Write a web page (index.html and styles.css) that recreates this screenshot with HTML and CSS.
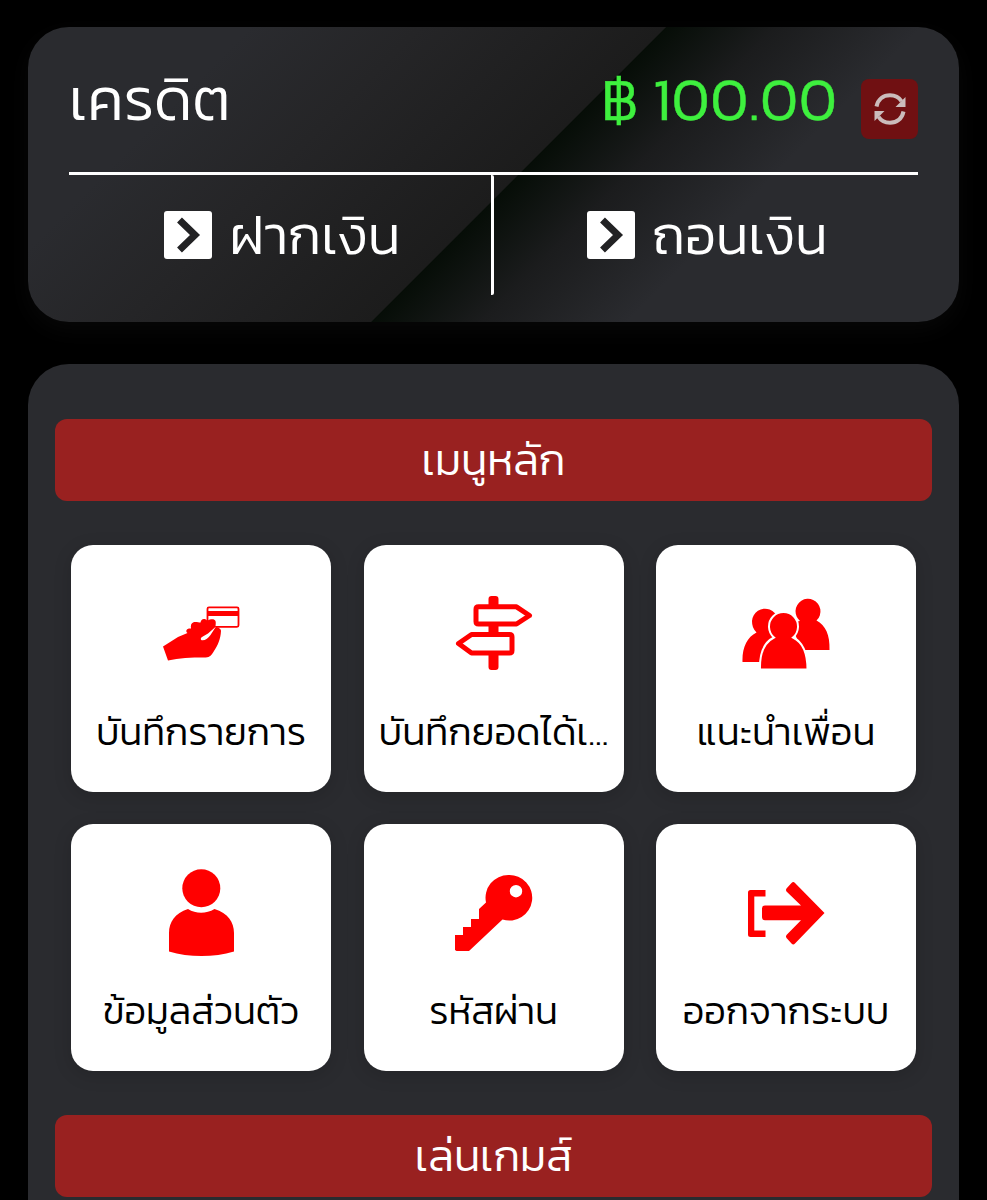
FILE: index.html
```html
<!DOCTYPE html>
<html lang="th">
<head>
<meta charset="UTF-8">
<meta name="viewport" content="width=device-width, initial-scale=1.0">
<title>เครดิต</title>
<link rel="stylesheet" href="styles.css">
</head>
<body>
<div class="wallet">
  <div class="wallet-top">
    <span class="wallet-label">เครดิต</span>
    <span class="wallet-amount">฿ 100.00</span>
    <button class="refresh" type="button" aria-label="refresh">
      <svg viewBox="0 0 32 32" width="32" height="32">
        <path d="M2.500 13.500C4 6 9.500 2.200 16 2.200c5 0 9 2 11.500 6" fill="none" stroke="#cbbcbc" stroke-width="4"/>
        <path d="M31.500 4v10H21.500z" fill="#cbbcbc"/>
        <path d="M29.500 18.500C28 26 22.500 29.800 16 29.800c-5 0-9-2-11.500-6" fill="none" stroke="#cbbcbc" stroke-width="4"/>
        <path d="M.5 28V18h10z" fill="#cbbcbc"/>
      </svg>
    </button>
  </div>
  <div class="wallet-actions">
    <a class="action">
      <svg viewBox="0 0 48 48" width="48" height="48"><rect width="48" height="48" rx="3" fill="#fff"/><path d="M15.500 9L31 24 15.500 39" fill="none" stroke="#222224" stroke-width="7"/></svg>
      <span>ฝากเงิน</span>
    </a>
    <a class="action">
      <svg viewBox="0 0 48 48" width="48" height="48"><rect width="48" height="48" rx="3" fill="#fff"/><path d="M15.500 9L31 24 15.500 39" fill="none" stroke="#222224" stroke-width="7"/></svg>
      <span>ถอนเงิน</span>
    </a>
  </div>
</div>

<div class="panel">
  <h2 class="bar">เมนูหลัก</h2>
  <div class="menu-grid">
    <a class="tile">
      <svg viewBox="1 0 120 100" width="120" height="100">
        <rect x="67.500" y="27.300" width="31" height="19.500" rx="1.500" fill="#fff" stroke="red" stroke-width="1.800"/>
        <path d="M67 31h32v5H67z" fill="red"/>
        <path d="M23 66.500L38 57l9.500-4c-1.500-1-1.500-2.500-.5-3.500 1-1.200 2.500-1.200 4-1-.5-3 0-5.500 2.500-6.300 2.500-.7 5 .3 7 .3.500-2.500 2-4 4-3.500 1.500.3 2 1.200 3 1.500 3-1.500 7-2 8 .5.600 2 0 4 0 6 2 0 5.500 1.500 5.500 4-.5 8-3 14-7 20-3 5.500-5 6.500-10 6.500-13 0-25 .3-36 3z" fill="red"/>
        <path d="M76 46.500l-8 7-6 3.500c-1.800 1.200-1.500 3.200.5 3.300 3 0 6-2.300 8-5.300z" fill="#fff"/>
      </svg>
      <span class="tile-text">บันทึกรายการ</span>
    </a>
    <a class="tile">
      <svg viewBox="3.500 0 120 100" width="120" height="100">
        <path d="M58 26v-7q0-3 3-3h4q3 0 3 3v7zM58 45h10v8H58zM58 73h10v14q0 3-3 3h-4q-3 0-3-3z" fill="red"/>
        <path d="M48 26.800h38L99 35.500 86 44H48q-2.500 0-2.500-2.500V29.300q0-2.500 2.500-2.500zM41 54.500h38q2.500 0 2.500 2.500v13.500q0 2.500-2.500 2.500H41L28 63.500z" fill="#fff" stroke="red" stroke-width="5" stroke-linejoin="round"/>
      </svg>
      <span class="tile-text turnover">บันทึกยอดได้เ...</span>
    </a>
    <a class="tile">
      <svg viewBox="1 0 130 100" width="130" height="100">
        <path d="M75.500 31a12.500 12.500 0 1 1 21 9.500c9 5 13.500 14 13 29.500H82L74 52V42l6-1c-3-3-4.500-6-4.500-10z" fill="red"/>
        <path d="M32 41a13 13 0 1 1 23 9v32H22.500C22 68 27 57 36.500 52.500 33 49 32 45 32 41z" fill="red"/>
        <path d="M54 57.500C44.500 62 39.500 72 40 89.500h47.500C87.500 72 82.500 62 73 57.500A14.500 14.500 0 1 0 54 57.500z" fill="red" stroke="#fff" stroke-width="2"/>
      </svg>
      <span class="tile-text">แนะนำเพื่อน</span>
    </a>
    <a class="tile">
      <svg viewBox="1 -1 120 100" width="120" height="100">
        <circle cx="61.300" cy="28.300" r="19" fill="red"/>
        <path d="M48 49c8 5 18 5 26.500 0C88 53 94 62 94 73v18.500c-20 6-45 6-65 0V73c0-11 6-20 19-24z" fill="red"/>
      </svg>
      <span class="tile-text">ข้อมูลส่วนตัว</span>
    </a>
    <a class="tile">
      <svg viewBox="4.500 -1 120 100" width="120" height="100">
        <path fill-rule="evenodd" d="M79 15a22.800 22.800 0 1 1-6 44.500L39.500 91H27l-1.500-1V75h8v-8h8v-8h8V49l7-6.500A22.800 22.800 0 0 1 79 15zM86.500 25a6.200 6.200 0 1 0 0 12.400 6.200 6.200 0 0 0 0-12.400z" fill="red"/>
      </svg>
      <span class="tile-text">รหัสผ่าน</span>
    </a>
    <a class="tile">
      <svg viewBox="1 -1 120 100" width="120" height="100">
        <path d="M40.500 30H25.500Q23 30 23 32.500v42Q23 77 25.500 77h15v-6.500H29.300v-34h11.200z" fill="red"/>
        <path d="M40 45.500h36L61.500 31.500q-1.200-1.500 0-3l5-5.500q1.800-1.800 3.500 0L99.500 53 70 83.500q-1.700 1.800-3.500 0l-5-5.500q-1.200-1.500 0-3L76 60.300H40q-3 0-3-3V48.500q0-3 3-3z" fill="red"/>
      </svg>
      <span class="tile-text">ออกจากระบบ</span>
    </a>
  </div>
  <h2 class="bar">เล่นเกมส์</h2>
</div>
</body>
</html>
```

FILE: styles.css
```css
* {
  box-sizing: border-box;
}

body {
  margin: 0;
  padding: 27px 28px 0;
  height: 1200px;
  overflow: hidden;
  background: #000;
  color: #fff;
  font-family: 'Kanit', 'Prompt', 'Inter', 'Noto Sans Thai', sans-serif;
  font-weight: 300;
}

svg {
  display: block;
  flex-shrink: 0;
}

.wallet {
  width: 931px;
  height: 295px;
  padding: 0 41px;
  border-radius: 41px;
  background: linear-gradient(135deg, #2a2b2f 18%, #252527 32%, #1c1c1c 52%, #060d07 52.1%, #1b1c1d 61%, #2a2b2f 73%);
  box-shadow: 0 8px 24px rgba(255, 255, 255, 0.03);
}

.wallet-top {
  display: flex;
  align-items: center;
  height: 148px;
  border-bottom: 3px solid #fff;
}

.wallet-label {
  flex: 1;
  font-size: 60px;
  line-height: 80px;
  padding-bottom: 2px;
}

.wallet-amount {
  color: #3ef03e;
  font-size: 59px;
  line-height: 80px;
  letter-spacing: 0.6px;
  padding-bottom: 2px;
  margin-right: 23.5px;
  -webkit-text-stroke: 0.5px #3ef03e;
}

.refresh {
  display: flex;
  align-items: center;
  justify-content: center;
  width: 57px;
  height: 60px;
  padding: 0;
  margin-top: 19px;
  border: 0;
  border-radius: 8px;
  background: #701012;
}

.wallet-actions {
  display: grid;
  grid-template-columns: 1fr 1fr;
  height: 120px;
}

.action {
  display: flex;
  align-items: center;
  justify-content: center;
  gap: 17px;
  padding-left: 3px;
  font-size: 54.4px;
  line-height: 80px;
  white-space: nowrap;
}

.action:first-child {
  padding-left: 5px;
  border-right: 3px solid #fff;
  border-radius: 0 2px 2px 0;
}

.panel {
  width: 931px;
  height: 836px;
  margin-top: 42px;
  padding: 54.5px 27px 0;
  border-radius: 41px 41px 0 0;
  background: #2a2b2f;
}

.bar {
  height: 82px;
  margin: 0;
  border-radius: 12px;
  background: #992120;
  font-size: 43.8px;
  font-weight: 300;
  line-height: 81px;
  text-align: center;
}

.menu-grid {
  display: grid;
  grid-template-columns: repeat(3, 260px);
  grid-auto-rows: 247px;
  justify-content: center;
  gap: 32.500px;
  padding: 44px 0;
}

.tile {
  display: flex;
  flex-direction: column;
  align-items: center;
  height: 247px;
  padding-top: 35px;
  border-radius: 22px;
  background: #fff;
  color: #000;
  box-shadow: 0 4px 18px rgba(0, 0, 0, 0.15);
}

.tile-text {
  height: 60px;
  margin-top: 22px;
  font-size: 38.200px;
  line-height: 60px;
  white-space: nowrap;
}

.turnover {
  font-size: 38.500px;
}
```
